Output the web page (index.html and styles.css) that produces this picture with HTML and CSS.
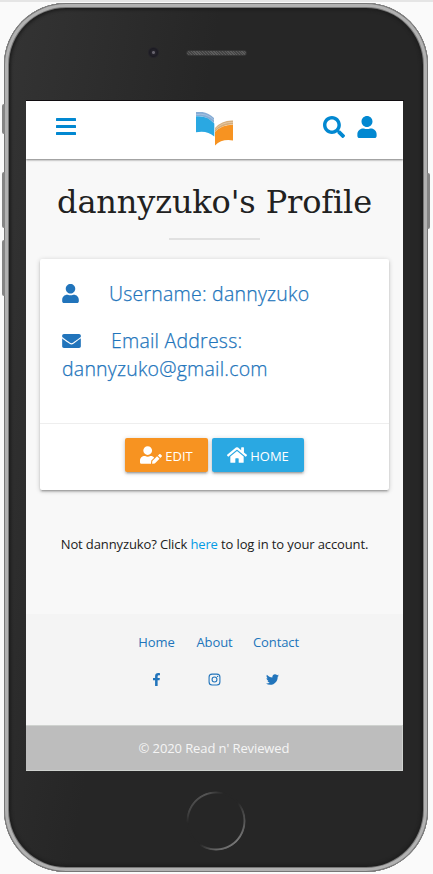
FILE: index.html
```html
<!DOCTYPE html>
<html lang="en">
<head>
<meta charset="utf-8">
<title>Read n' Reviewed</title>
<link rel="stylesheet" href="styles.css">
</head>
<body>
<svg class="defs" width="0" height="0" aria-hidden="true">
  <symbol id="user" viewBox="0 0 448 512"><path d="M224 256c70.7 0 128-57.3 128-128S294.7 0 224 0 96 57.3 96 128s57.3 128 128 128zm89.6 32h-16.7c-22.2 10.2-46.9 16-72.9 16s-50.6-5.8-72.9-16h-16.7C60.2 288 0 348.2 0 422.4V464c0 26.5 21.5 48 48 48h352c26.5 0 48-21.5 48-48v-41.6c0-74.2-60.2-134.4-134.4-134.4z"/></symbol>
</svg>
<div class="phone">
  <i class="side mute"></i><i class="side vol-up"></i><i class="side vol-down"></i><i class="side power"></i>
  <div class="bezel-top"><i class="camera"></i><i class="speaker"></i></div>
  <div class="screen">
    <header class="navbar">
      <svg class="bars" viewBox="0 0 20 18"><rect width="20" height="3" rx=".6"/><rect y="7" width="20" height="3" rx=".6"/><rect y="14" width="20" height="3" rx=".6"/></svg>
      <svg class="logo" viewBox="0 0 37 34"><path d="M0 0Q10-1.500 18 6v5Q10 3 0 4z" fill="#86acd5"/><path d="M0 2.700Q10 .5 18 8" fill="none" stroke="#c3d6ea" stroke-width=".5"/><path d="M0 4.300Q11 3 18.300 11.500V24.500Q11 18 0 20.300z" fill="#2aa8e2"/><path d="M19 16Q26 8 37 8.500v4Q26 12 19 20z" fill="#d5ad7b"/><path d="M19 17.500Q26 10 37 10.300" fill="none" stroke="#eed9bd" stroke-width=".6"/><path d="M19 20Q26 12.600 37 12.800V28.500Q26 26.500 19 33.500z" fill="#f79321"/></svg>
      <div class="nav-icons">
        <svg class="search" viewBox="0 0 512 512"><path d="M505 442.700L405.300 343c-4.500-4.500-10.600-7-17-7H372c27.600-35.300 44-79.700 44-128C416 93.100 322.900 0 208 0S0 93.100 0 208s93.100 208 208 208c48.300 0 92.700-16.400 128-44v16.300c0 6.400 2.500 12.500 7 17l99.700 99.700c9.400 9.400 24.600 9.400 33.900 0l28.300-28.300c9.400-9.400 9.400-24.600.1-34zM208 336c-70.700 0-128-57.200-128-128 0-70.700 57.200-128 128-128 70.700 0 128 57.200 128 128 0 70.700-57.200 128-128 128z"/></svg>
        <svg class="account"><use href="#user"/></svg>
      </div>
    </header>
    <main>
      <h1>dannyzuko's Profile</h1>
      <hr>
      <section class="card">
        <div class="details">
          <p><svg class="icon-user"><use href="#user"/></svg><span class="username">Username: dannyzuko</span></p>
          <p><svg class="icon-mail" viewBox="0 0 512 384"><path d="M502.300 126.800c3.900-3.100 9.700-.2 9.700 4.700V336c0 26.500-21.500 48-48 48H48c-26.500 0-48-21.500-48-48V131.600c0-5 5.700-7.800 9.700-4.700 22.400 17.400 52.100 39.500 154.100 113.600 21.100 15.400 56.700 47.800 92.200 47.600 35.700.3 72-32.800 92.300-47.600 102-74.100 131.600-96.300 154-113.700zM256 256c23.200.4 56.600-29.200 73.400-41.400 132.700-96.300 142.800-104.700 173.400-128.700 5.800-4.500 9.200-11.500 9.200-18.900V48c0-26.500-21.500-48-48-48H48C21.500 0 0 21.500 0 48v19c0 7.400 3.400 14.300 9.200 18.900 30.600 23.900 40.700 32.400 173.400 128.700 16.800 12.200 50.200 41.800 73.400 41.400z"/></svg><span class="email">Email Address:</span><br><span class="address">dannyzuko@gmail.com</span></p>
        </div>
        <div class="actions">
          <a class="btn edit"><svg viewBox="0 0 640 512"><path d="M224 256c70.700 0 128-57.300 128-128S294.700 0 224 0 96 57.300 96 128s57.300 128 128 128zm89.600 32h-16.700c-22.200 10.200-46.900 16-72.900 16s-50.600-5.800-72.900-16h-16.700C60.200 288 0 348.200 0 422.400V464c0 26.500 21.500 48 48 48h274.900c-2.400-6.800-3.400-14-2.600-21.300l6.800-60.900 1.200-11.100 7.900-7.900 77.300-77.300c-24.500-27.700-60-45.500-99.900-45.500zm45.300 145.300l-6.800 61c-1.100 10.200 7.500 18.800 17.600 17.600l60.900-6.800 137.900-137.900-71.700-71.700-137.900 137.800zM633 268.900L595.100 231c-9.300-9.300-24.500-9.300-33.800 0l-37.800 37.800-4.100 4.100 71.800 71.700 41.800-41.800c9.300-9.400 9.300-24.500 0-33.900z"/></svg><span>EDIT</span></a>
          <a class="btn home"><svg viewBox="0 0 576 512"><path d="M280.400 148.300L96 300.100V464a16 16 0 0 0 16 16l112.100-.3a16 16 0 0 0 15.900-16V368a16 16 0 0 1 16-16h64a16 16 0 0 1 16 16v95.600a16 16 0 0 0 16 16.100L464 480a16 16 0 0 0 16-16V300L295.700 148.300a12.200 12.200 0 0 0-15.300 0zM571.600 251.500L488 182.600V44.100a12 12 0 0 0-12-12h-56a12 12 0 0 0-12 12v72.600L318.500 43a48 48 0 0 0-61 0L4.300 251.500a12 12 0 0 0-1.600 16.900l25.500 31A12 12 0 0 0 45.200 301l235.200-193.700a12.200 12.200 0 0 1 15.300 0L530.900 301a12 12 0 0 0 16.900-1.600l25.500-31a12 12 0 0 0-1.700-16.900z"/></svg><span>HOME</span></a>
        </div>
      </section>
      <p class="not-you">Not dannyzuko? Click <a>here</a> to log in to your account.</p>
    </main>
    <footer>
      <div class="links">
        <a>Home</a><a>About</a><a>Contact</a>
        <svg class="facebook" viewBox="0 0 320 512"><path d="M279.100 288l14.200-92.700h-88.900v-60.100c0-25.300 12.400-50.100 52.200-50.100H297V6.300S260.400 0 225.400 0C152 0 104.100 44.400 104.100 124.700v70.600H22.900V288h81.200v224h100.200V288z"/></svg>
        <svg class="instagram" viewBox="0 0 24 24"><rect x="2" y="2" width="20" height="20" rx="5.500" fill="none" stroke="currentColor" stroke-width="2"/><circle cx="12" cy="12" r="4.500" fill="none" stroke="currentColor" stroke-width="2"/><circle cx="17.700" cy="6.300" r="1.300"/></svg>
        <svg class="twitter" viewBox="0 0 512 512"><path d="M459.400 151.700c.3 4.500.3 9.100.3 13.600 0 138.700-105.600 298.600-298.600 298.600-59.500 0-114.700-17.200-161.100-47.100 8.400 1 16.600 1.300 25.300 1.300 49.100 0 94.200-16.600 130.300-44.800-46.100-1-84.800-31.200-98.100-72.800 6.500 1 13 1.600 19.800 1.600 9.400 0 18.800-1.300 27.600-3.600-48.100-9.700-84.100-52-84.100-103v-1.300c14 7.800 30.200 12.700 47.400 13.300-28.300-18.800-46.800-51-46.800-87.400 0-19.500 5.200-37.400 14.300-53 51.700 63.700 129.300 105.300 216.400 109.800-1.600-7.800-2.600-15.900-2.600-24 0-57.800 46.800-104.900 104.900-104.900 30.200 0 57.500 12.700 76.700 33.100 23.700-4.500 46.500-13.300 66.600-25.300-7.800 24.400-24.400 44.800-46.100 57.800 21.100-2.300 41.600-8.100 60.400-16.200-14.300 20.800-32.200 39.300-52.600 54.300z"/></svg>
      </div>
      <div class="copyright">© 2020 Read n' Reviewed</div>
    </footer>
  </div>
  <div class="bezel-bottom"><i class="home-key"></i></div>
</div>
</body>
</html>
```
FILE: styles.css
```css
* { box-sizing: border-box; }
body {
  margin: 0;
  height: 874px;
  padding: 3px 5px 0 4px;
  background: linear-gradient(#e5e5e5 2px, #fafafa 2px);
  font-family: "Open Sans", sans-serif;
  font-weight: 400;
  overflow: hidden;
}
svg { fill: currentColor; }
.defs { position: absolute; }
.phone {
  position: relative;
  width: 424px;
  height: 869px;
  padding: 0 24px 0 22px;
  border-radius: 62px;
  background: linear-gradient(100deg, #343434, #262626 38%);
  box-shadow: inset 0 0 0 1px #777, inset 0 0 0 4px #b1b1b1, inset 0 0 0 5px #777, inset 0 0 3px 7px #1e1e1e;
}
.side { position: absolute; width: 3px; background: #858585; border-radius: 2px 0 0 2px; left: -2px; }
.mute { top: 101px; height: 30px; }
.vol-up { top: 169px; height: 56px; }
.vol-down { top: 237px; height: 56px; }
.power { top: 170px; height: 56px; left: 423px; border-radius: 0 2px 2px 0; }
.bezel-top { height: 98px; padding: 44px 0 0 122px; display: flex; align-items: flex-start; border-bottom: 1px solid #100c10; }
.camera { width: 11px; height: 11px; border-radius: 50%; background: radial-gradient(#66636d 0 1px, #25232c 2px, #1c1b22 4px, #242329 5px); }
.speaker { width: 61px; height: 6px; margin: 3px 0 0 27px; border: 1px solid #343434; border-radius: 3px; background: repeating-linear-gradient(45deg, #444 0 1px, #5c5c5c 1px 2px); }
.screen { width: 377px; height: 670px; display: flex; flex-direction: column; background: #f8f8f8; overflow: hidden; }
.navbar {
  flex: none;
  height: 58px;
  padding: 0 26px 0 30px;
  display: flex;
  justify-content: space-between;
  background: #fff;
  color: #0288d1;
  box-shadow: 0 1px 2px rgba(0,0,0,.5);
}
.bars { width: 20px; height: 18px; margin-top: 17px; }
.logo { width: 37px; height: 34px; margin: 11px 0 0 30px; }
.nav-icons { display: flex; gap: 12px; padding-top: 15px; }
.search { width: 22px; height: 22px; }
.account { width: 20px; height: 22px; }
main { flex: none; height: 455px; padding: 0 14px; color: #212121; }
h1 {
  margin: 21px 0 0;
  height: 44px;
  font: 400 32px/45px "DejaVu Serif", serif;
  letter-spacing: -.15px;
  text-align: center;
  white-space: nowrap;
}
hr { width: 91px; height: 2px; margin: 14px auto 0; border: 0; background: #e1e1e1; }
.card {
  height: 231px;
  margin-top: 19px;
  background: #fff;
  border-radius: 2px;
  box-shadow: 0 2px 2px rgba(0,0,0,.14), 0 3px 1px -2px rgba(0,0,0,.12), 0 1px 5px rgba(0,0,0,.2);
}
.details {
  height: 164px;
  padding: 21px 22px 0;
  font-size: 19.500px;
  font-weight: 300;
  line-height: 28px;
  letter-spacing: .22px;
  color: #2174bb;
  -webkit-text-stroke: .25px #2174bb;
}
.details p { margin: 0 0 19px; white-space: nowrap; }
.details svg { vertical-align: -2px; }
.icon-user { width: 17px; height: 19px; margin-right: 30px; }
.icon-mail { width: 19px; height: 14px; margin-right: 30px; }
.details .icon-mail { vertical-align: 0; }
.actions { display: flex; justify-content: center; gap: 4px; height: 67px; padding-top: 15px; border-top: 1px solid #eee; }
.btn {
  display: flex;
  align-items: center;
  justify-content: center;
  height: 34px;
  gap: 3px;
  border-radius: 2px;
  color: #fff;
  font-size: 13px;
  box-shadow: 0 2px 2px rgba(0,0,0,.14), 0 3px 1px -2px rgba(0,0,0,.12), 0 1px 5px rgba(0,0,0,.2);
}
.actions .btn { margin-top: -1px; }
.btn span { padding-top: 2px; }
.edit { width: 83px; background: #f79321; }
.home { width: 92px; background: #2aa8e2; }
.edit svg { width: 22px; height: 18px; }
.home svg { width: 20px; height: 18px; }
.not-you { margin: 44px 0 0; font-size: 13px; line-height: 20px; letter-spacing: -.12px; text-align: center; white-space: nowrap; }
.not-you a { color: #039be5; }
footer { flex: 1; display: flex; flex-direction: column; background: #f4f4f4; color: #2174bb; letter-spacing: -.1px; }
.links { flex: 1; display: grid; grid-template-columns: 58px 58px 65px; grid-template-rows: 20px 14px; row-gap: 20px; justify-content: center; padding: 18px 0 0 7px; justify-items: center; align-items: center; font-size: 13px; }
.facebook { width: 9px; height: 13px; }
.instagram { width: 13px; height: 13px; }
.twitter { width: 13px; height: 13px; margin-right: 7px; }
.copyright { height: 46px; background: #bdbdbd; border: 1px solid #cfd2cf; border-left: 0; color: #f5f5f5; font-size: 13px; line-height: 44px; text-align: center; }
.bezel-bottom { display: flex; justify-content: center; padding-top: 20px; }
.home-key {
  width: 60px;
  height: 60px;
  margin-left: 1px;
  border-radius: 50%;
  background: conic-gradient(from 70deg, #444, #777 60deg, #666 110deg, #262626 145deg 195deg, #444 220deg, #555 270deg, #262626 305deg 340deg, #444);
  -webkit-mask: radial-gradient(circle, transparent 27px, #000 28px 29px, transparent 30px);
  mask: radial-gradient(circle, transparent 27px, #000 28px 29px, transparent 30px);
}
```
